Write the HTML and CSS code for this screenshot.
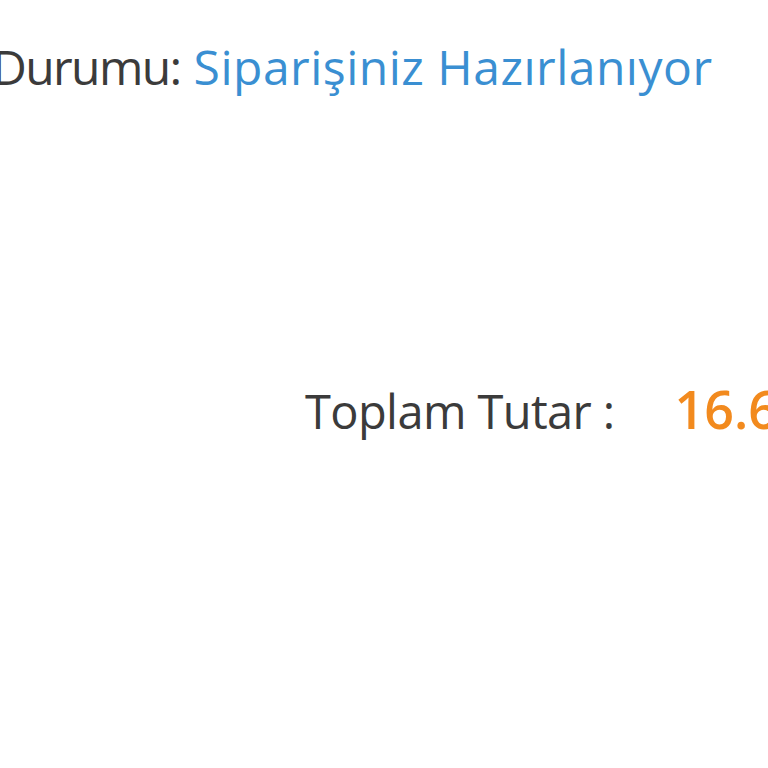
FILE: index.html
```html
<!DOCTYPE html>
<html lang="tr">
<head>
<meta charset="utf-8">
<link rel="stylesheet" href="styles.css">
</head>
<body>
<div class="page">
  <div class="status">
    <span class="label">Durumu:</span>
    <span class="value">Siparişiniz Hazırlanıyor</span>
  </div>
  <div class="total">
    <span class="total-label">Toplam Tutar :</span>
    <span class="total-value">16.65 TL</span>
  </div>
</div>
</body>
</html>
```
FILE: styles.css
```css
html, body {
  margin: 0;
  padding: 0;
  background: #ffffff;
  overflow: hidden;
}
.page {
  width: 768px;
  height: 768px;
  font-family: "Open Sans", "Noto Sans", sans-serif;
  display: flex;
  flex-direction: column;
}
.status {
  margin-left: -8px;
  margin-top: 34px;
  font-size: 48px;
  line-height: 66px;
  white-space: nowrap;
  display: flex;
  gap: 13px;
}
.label {
  color: #3b3b3b;
  letter-spacing: -1.6px;
}
.value {
  color: #3a8fd2;
  letter-spacing: 0.5px;
}
.total {
  margin-top: 276px;
  padding-left: 305px;
  display: flex;
  align-items: baseline;
  gap: 60px;
  white-space: nowrap;
  line-height: 66px;
}
.total-label {
  font-size: 47px;
  color: #3b3b3b;
  letter-spacing: -0.6px;
}
.total-value {
  font-size: 52px;
  font-weight: 600;
  color: #f28a1e;
}
```
